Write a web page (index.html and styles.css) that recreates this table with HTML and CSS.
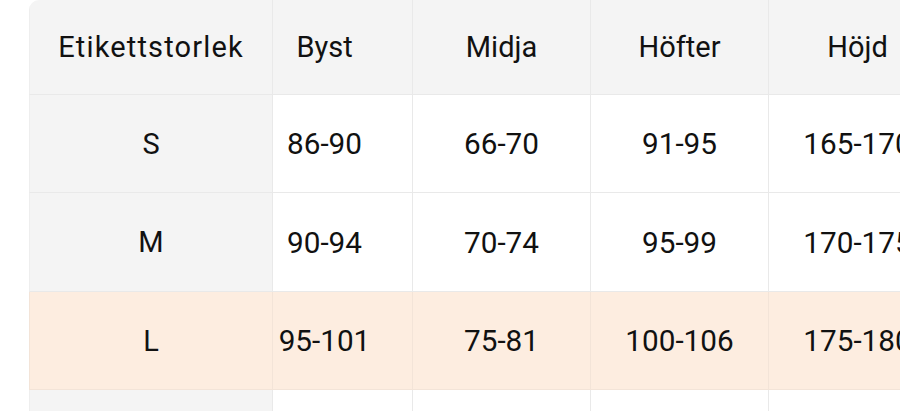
FILE: index.html
```html
<!DOCTYPE html>
<html lang="sv">
<head>
<meta charset="utf-8">
<title>Storleksguide</title>
<link rel="stylesheet" href="styles.css">
</head>
<body>
<div class="viewport">
  <div class="size-table" role="table">
    <div class="cell head first label" role="columnheader">Etikettstorlek</div>
    <div class="cell head narrow" role="columnheader">Byst</div>
    <div class="cell head" role="columnheader">Midja</div>
    <div class="cell head" role="columnheader">Höfter</div>
    <div class="cell head" role="columnheader">Höjd</div>

    <div class="cell first" role="rowheader">S</div>
    <div class="cell narrow val">86-90</div>
    <div class="cell val">66-70</div>
    <div class="cell val">91-95</div>
    <div class="cell val">165-170</div>

    <div class="cell first" role="rowheader">M</div>
    <div class="cell narrow val">90-94</div>
    <div class="cell val">70-74</div>
    <div class="cell val">95-99</div>
    <div class="cell val">170-175</div>

    <div class="cell first hl" role="rowheader">L</div>
    <div class="cell narrow val hl">95-101</div>
    <div class="cell val hl">75-81</div>
    <div class="cell val hl">100-106</div>
    <div class="cell val hl">175-180</div>

    <div class="cell first" role="rowheader">XL</div>
    <div class="cell narrow val">101-107</div>
    <div class="cell val">81-87</div>
    <div class="cell val">106-112</div>
    <div class="cell val">175-180</div>
  </div>
</div>
</body>
</html>
```

FILE: styles.css
```css
html, body {
  margin: 0;
  padding: 0;
  background: #ffffff;
}

.viewport {
  width: 900px;
  height: 411px;
  overflow: hidden;
  padding-left: 29px;
  box-sizing: border-box;
}

.size-table {
  display: grid;
  grid-template-columns: 244px 140px 178px 178px 178px;
  grid-template-rows: 95px 98px 99px 98px 98px;
  width: max-content;
  font-family: Roboto, "Noto Sans", sans-serif;
  font-size: 29px;
  color: #111111;
  border-top-left-radius: 10px;
  overflow: hidden;
}

.cell {
  display: flex;
  align-items: center;
  justify-content: center;
  box-sizing: border-box;
  background: #ffffff;
  border-right: 1px solid #e9e9e9;
  border-bottom: 1px solid #e9e9e9;
  white-space: nowrap;
}

.head {
  background: #f4f4f4;
}

.label {
  letter-spacing: 1.15px;
}

.val {
  font-size: 29.7px;
}

.first {
  background: #f4f4f4;
  border-left: 1px solid #eeeeee;
}

.narrow {
  padding-right: 36px;
}

.hl {
  background: #fdede0;
  border-color: #f3e4d8;
}

.first.hl {
  background: #fdede0;
}
```
